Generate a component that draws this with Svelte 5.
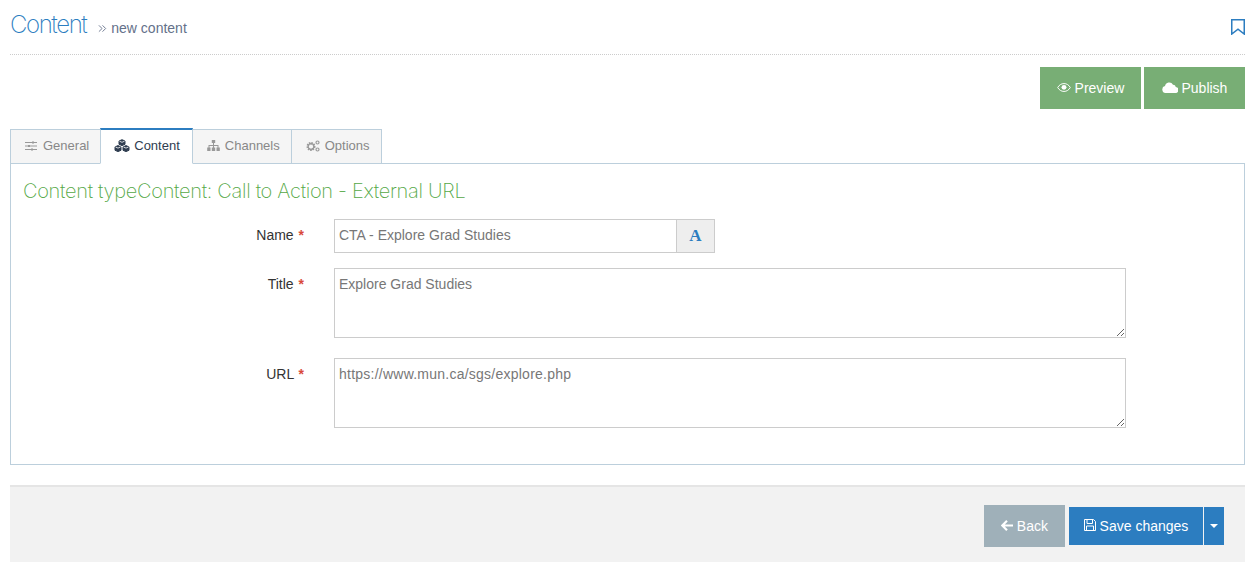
<script>
  let tabs = ['General', 'Content', 'Channels', 'Options'];
  let active = 'Content';
</script>

<div class="page">
  <header class="top">
    <h1>Content</h1>
    <span class="sub">
      <svg class="chev" viewBox="0 0 10 10" width="9" height="9"><path d="M1 1.500 4.500 5 1 8.500M5 1.500 8.500 5 5 8.500" fill="none" stroke="currentColor" stroke-width="1" /></svg>
      new content
    </span>
    <svg class="bookmark" viewBox="0 0 14 16" width="14" height="16"><path d="M.75.750h12.500v14.300L7 10.200.75 15.050z" fill="none" stroke="#2c7dc0" stroke-width="1.500" /></svg>
  </header>

  <div class="actions">
    <button class="green">
      <svg viewBox="0 0 16 12" width="14" height="11"><path d="M.8 6C2.600 3 5 1.500 8 1.500S13.400 3 15.200 6C13.400 9 11 10.500 8 10.500S2.600 9 .8 6z" fill="none" stroke="#fff" stroke-width="1.100" /><circle cx="8" cy="5.800" r="2.800" fill="#fff" /></svg>
      Preview
    </button>
    <button class="green">
      <svg viewBox="0 0 16 11" width="16" height="11"><path d="M4 11a3.500 3.500 0 0 1-1-6.900A4.300 4.300 0 0 1 11 2.700 2.800 2.800 0 0 1 13.800 5 3 3 0 0 1 13 11z" fill="#fff" /></svg>
      Publish
    </button>
  </div>

  <nav class="tabs">
    {#each tabs as t}
      <div class="tab" class:active={t === active}>
        {#if t === 'General'}
          <svg viewBox="0 0 12 10" width="12" height="10"><path d="M0 1.500h12M0 5h12M0 8.500h12" stroke="#999" stroke-width="1" /><path d="M7 .5h2v2H7zM3 4h2v2H3zM6 7.500h2v2H6z" fill="#999" /></svg>
        {:else if t === 'Content'}
          <svg viewBox="0 0 16 14" width="16" height="14">
            <g fill="#2f3d50" stroke="#2f3d50" stroke-width="1" stroke-linejoin="round">
              <path d="M8 .7l3 1.300v3.300L8 6.600 5 5.300V2z" />
              <path d="M4 6.600l3 1.300v3.400l-3 1.300-3-1.300V7.900z" />
              <path d="M12 6.600l3 1.300v3.400l-3 1.300-3-1.300V7.900z" />
            </g>
            <path d="M5.500 2.200 8 3.300l2.500-1.100M1.500 8 4 9.100 6.500 8M9.500 8 12 9.100 14.500 8" fill="none" stroke="#fff" stroke-width=".8" />
          </svg>
        {:else if t === 'Channels'}
          <svg viewBox="0 0 13 11" width="13" height="11"><path d="M4.800 0h3.400v3H7v2h4.500v2.500h1.300V11H9.500V7.500h1V6H7v1.500h1.200V11H4.800V7.500H6V6H2.500v1.500h1V11H.2V7.500h1.300V5H6V3H4.800z" fill="#999" /></svg>
        {:else}
          <svg viewBox="0 0 14 12" width="14" height="12"><circle cx="5" cy="6.500" r="3.300" fill="none" stroke="#999" stroke-width="2.400" stroke-dasharray="1.400 .8" /><circle cx="5" cy="6.500" r="2.900" fill="none" stroke="#999" stroke-width="1.200" /><circle cx="11.500" cy="2.500" r="1.500" fill="none" stroke="#999" stroke-width="1.200" /><circle cx="11.500" cy="9.500" r="1.500" fill="none" stroke="#999" stroke-width="1.200" /></svg>
        {/if}
        {t}
      </div>
    {/each}
  </nav>

  <section class="panel">
    <h2>Content typeContent: Call to Action - External URL</h2>
    <div class="row">
      <label for="name">Name <b>*</b></label>
      <div class="group">
        <input id="name" value="CTA - Explore Grad Studies" />
        <span class="addon">A</span>
      </div>
    </div>
    <div class="row wide">
      <label for="title">Title <b>*</b></label>
      <textarea id="title">Explore Grad Studies</textarea>
    </div>
    <div class="row">
      <label for="url">URL <b>*</b></label>
      <textarea id="url" class="link">https://www.mun.ca/sgs/explore.php</textarea>
    </div>
  </section>

  <footer class="bottom">
    <button class="back">
      <svg viewBox="0 0 12 11" width="12" height="11"><path d="M6 .8 1.300 5.500 6 10.200M1.800 5.500H12" fill="none" stroke="#fff" stroke-width="2.200" /></svg>
      Back
    </button>
    <div class="save">
      <button class="blue main">
        <svg viewBox="0 0 12 12" width="12" height="12"><path d="M.5.500h9l2 2v9H.5z" fill="none" stroke="#fff" /><path d="M3 1v3.500h5.500V1M2.500 11V7h7v4" fill="none" stroke="#fff" /></svg>
        Save changes
      </button>
      <button class="blue caret" aria-label="more"><i></i></button>
    </div>
  </footer>
</div>

<style>
  :global(body) {
    background: #fff;
    font-family: "Liberation Sans", Arial, sans-serif;
    font-size: 14px;
    color: #333;
  }
  .page {
    padding: 0 10px;
    height: 562px;
    box-sizing: border-box;
    overflow: hidden;
  }
  .top {
    display: flex;
    align-items: center;
    height: 54px;
    border-bottom: 1px dotted #ccc;
  }
  h1 {
    margin: 0 12px 6px 0;
    font-family: Inter, sans-serif;
    font-weight: 200;
    font-size: 24px;
    letter-spacing: -1.4px;
    color: #2c7dc0;
  }
  .sub {
    color: #64718a;
    font-size: 14px;
    margin-top: 2px;
  }
  .bookmark {
    margin-left: auto;
  }
  .actions {
    display: flex;
    justify-content: flex-end;
    gap: 3px;
    margin-top: 12px;
  }
  button {
    border: 0;
    color: #fff;
    font: inherit;
    padding: 0;
  }
  .green {
    width: 101px;
    height: 42px;
    background: #78ae75;
  }
  .tabs {
    display: flex;
    margin-top: 18px;
    height: 36px;
    align-items: flex-end;
  }
  .tab {
    box-sizing: border-box;
    height: 35px;
    padding: 0 11px 2px 14px;
    display: flex;
    align-items: center;
    gap: 5px;
    color: #888;
    font-size: 13px;
    background: #f5f5f5;
    border: 1px solid #bccfdc;
    margin-right: -1px;
    margin-bottom: -1px;
    position: relative;
  }
  .tab:first-child {
    gap: 6px;
  }
  .tab.active {
    height: 36px;
    padding: 0 12px 2px 13px;
    gap: 4px;
    background: #fff;
    color: #2f3d50;
    border-top: 2px solid #2c7dc0;
    border-bottom-color: #fff;
    z-index: 1;
  }
  .panel {
    box-sizing: border-box;
    height: 302px;
    border: 1px solid #bccfdc;
    padding: 0 12px;
  }
  h2 {
    margin: 15px 0 16px;
    font-family: Inter, sans-serif;
    font-weight: 200;
    font-size: 20px;
    line-height: 24px;
    letter-spacing: -.3px;
    color: #55a846;
  }
  .row {
    display: flex;
    gap: 30px;
    margin-bottom: 15px;
  }
  .row.wide {
    margin-bottom: 20px;
  }
  label {
    width: 281px;
    text-align: right;
    padding-top: 8px;
  }
  label b {
    color: #d9493c;
    margin-left: 1px;
  }
  .group {
    display: flex;
    width: 381px;
  }
  input, textarea {
    box-sizing: border-box;
    border: 1px solid #ccc;
    border-radius: 0;
    font: inherit;
    color: #777;
    padding: 5px 4px 7px;
    outline: 0;
    background: #fff;
  }
  input {
    flex: 1;
    min-width: 0;
    height: 34px;
  }
  textarea {
    width: 792px;
    height: 70px;
    display: block;
    padding-top: 7px;
  }
  .link {
    letter-spacing: .24px;
  }
  .addon {
    box-sizing: border-box;
    width: 38px;
    height: 34px;
    background: #eee;
    border: 1px solid #ccc;
    border-left: 0;
    color: #2c7dc0;
    display: flex;
    align-items: center;
    justify-content: center;
    font-family: "Liberation Serif", serif;
    font-weight: bold;
    font-size: 17px;
  }
  .bottom {
    margin-top: 20px;
    height: 77px;
    box-sizing: border-box;
    background: #f2f2f2;
    border-top: 2px solid #e5e5e5;
    display: flex;
    justify-content: flex-end;
    align-items: center;
    padding: 3px 21px 0 0;
    gap: 4px;
  }
  .back {
    width: 81px;
    height: 42px;
    background: #9fb0b9;
  }
  .save {
    display: flex;
    gap: 1px;
  }
  .blue {
    background: #2c7dc0;
    height: 38px;
  }
  .main {
    width: 134px;
  }
  .caret {
    width: 20px;
    display: flex;
    align-items: center;
    justify-content: center;
  }
  .caret i {
    border: 4px solid transparent;
    border-top-color: #fff;
    border-bottom: 0;
  }
</style>
